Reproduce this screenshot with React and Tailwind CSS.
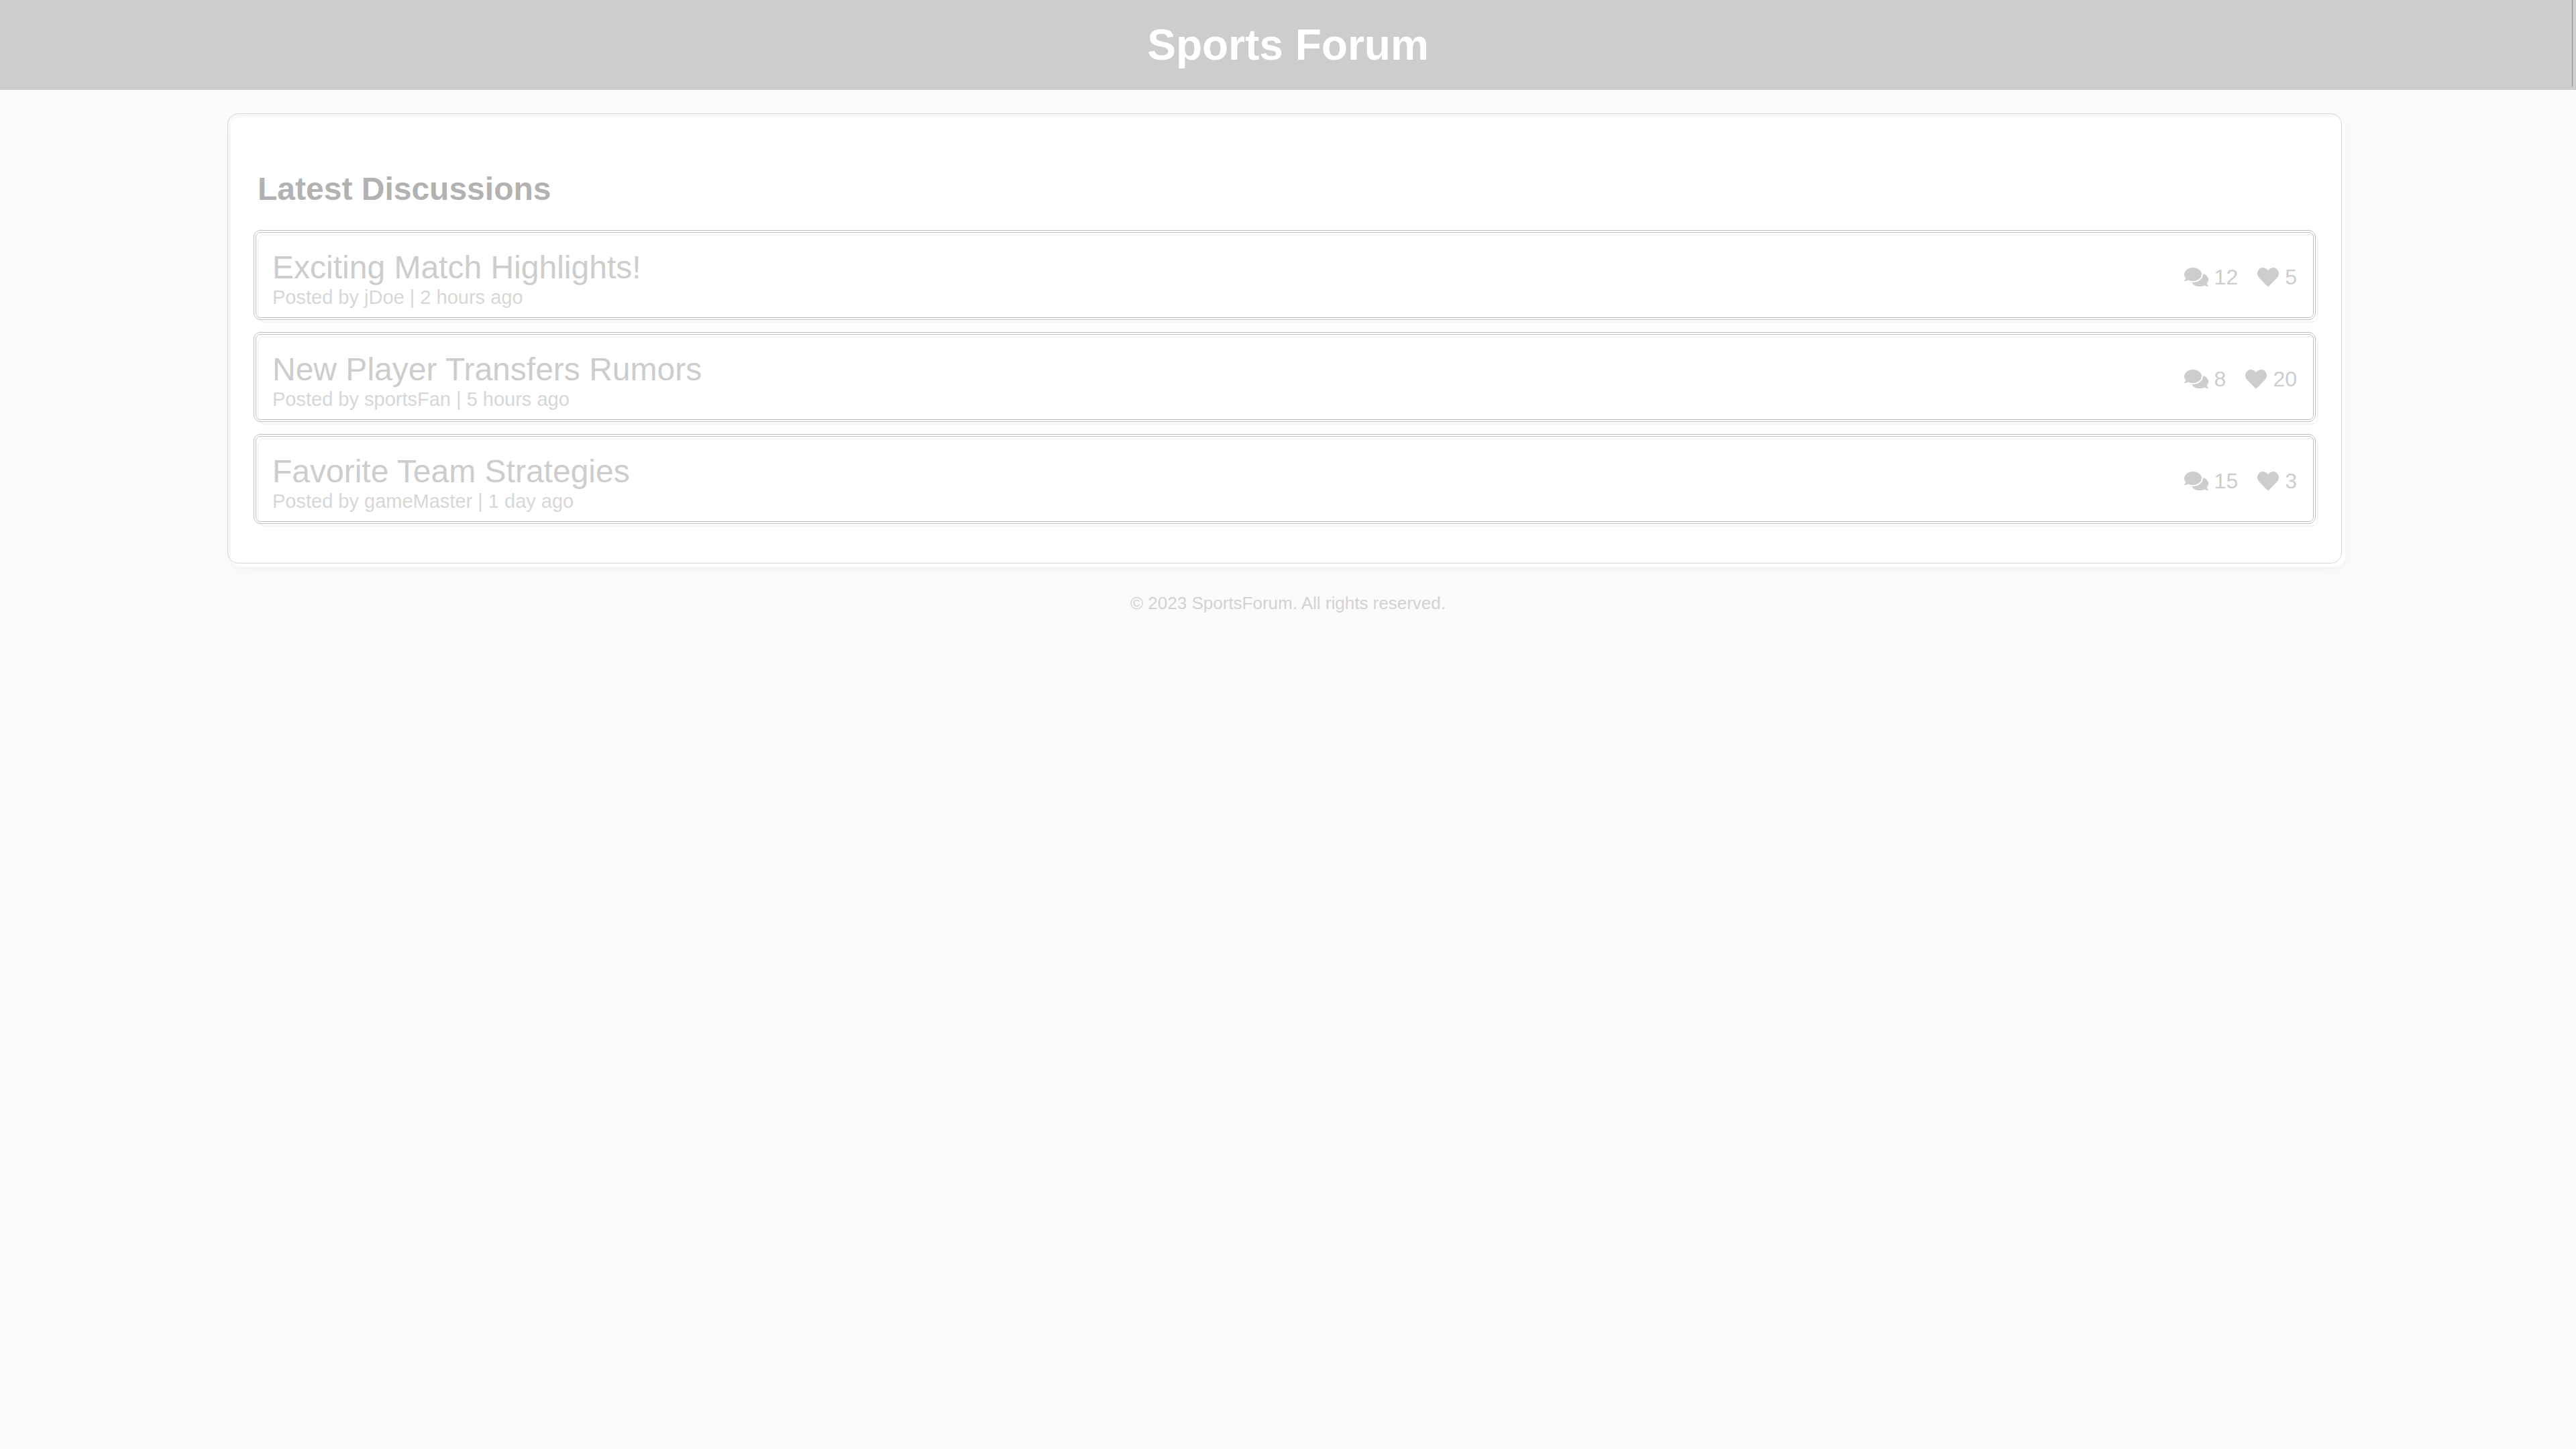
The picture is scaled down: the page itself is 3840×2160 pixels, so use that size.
import { FaComments, FaHeart } from "react-icons/fa";

const posts = [
  { title: "Exciting Match Highlights!", author: "jDoe", time: "2 hours ago", comments: 12, likes: 5 },
  { title: "New Player Transfers Rumors", author: "sportsFan", time: "5 hours ago", comments: 8, likes: 20 },
  { title: "Favorite Team Strategies", author: "gameMaster", time: "1 day ago", comments: 15, likes: 3 },
];

function Stat({ icon, label, value }) {
  return (
    <span className="flex items-center gap-[9px]" aria-label={label}>
      {icon}
      {value}
    </span>
  );
}

function Post({ post }) {
  return (
    <li className="relative flex items-center justify-between rounded-[10px] border-2 border-[#f4f4f4] p-5">
      <span
        aria-hidden="true"
        className="pointer-events-none absolute -top-2 right-[2px] bottom-[2px] -left-2 rounded-[10px] border-4 border-double border-[#c0c0c0]"
      />
      <div>
        <h3 className="text-[48px] leading-[56px] text-[#cdcdcd]">{post.title}</h3>
        <p className="text-[29px] leading-8 text-[#d7d7d7]">
          Posted by {post.author} | {post.time}
        </p>
      </div>
      <div className="flex gap-[29px] pr-[10px] pb-1 text-[32px] leading-9 text-[#cdcdcd]">
        <Stat icon={<FaComments className="h-8 w-9" aria-hidden="true" />} label="Comments" value={post.comments} />
        <Stat icon={<FaHeart className="h-8 w-8" aria-hidden="true" />} label="Likes" value={post.likes} />
      </div>
    </li>
  );
}

export default function App() {
  return (
    <div className="min-h-screen bg-[#fbfbfb] font-['Liberation_Sans',Arial,sans-serif]">
      <header className="relative bg-[#cdcdcd] py-[30px] text-center">
        <h1 className="text-[64px] leading-[74px] font-bold text-white">Sports Forum</h1>
        <span aria-hidden="true" className="absolute top-0 right-[5px] bottom-[5px] w-px bg-[#8c8c8c]" />
      </header>
      <main className="relative mx-auto mt-10 box-content w-4/5 rounded-2xl bg-white p-10 pb-[60px] shadow-[0_4px_20px_rgba(0,0,0,0.04)]">
        <span
          aria-hidden="true"
          className="pointer-events-none absolute -top-[5px] right-[5px] bottom-[5px] -left-[5px] rounded-2xl border border-[#d8d8d8]"
        />
        <h2 className="my-10 text-[48px] leading-[55px] font-bold text-[#b2b2b2]">Latest Discussions</h2>
        <ul className="flex flex-col gap-5">
          {posts.map((post) => (
            <Post key={post.title} post={post} />
          ))}
        </ul>
      </main>
      <footer className="mt-10 text-center text-[26px] leading-7 text-[#d2d2d2]">
        © 2023 SportsForum. All rights reserved.
      </footer>
    </div>
  );
}
